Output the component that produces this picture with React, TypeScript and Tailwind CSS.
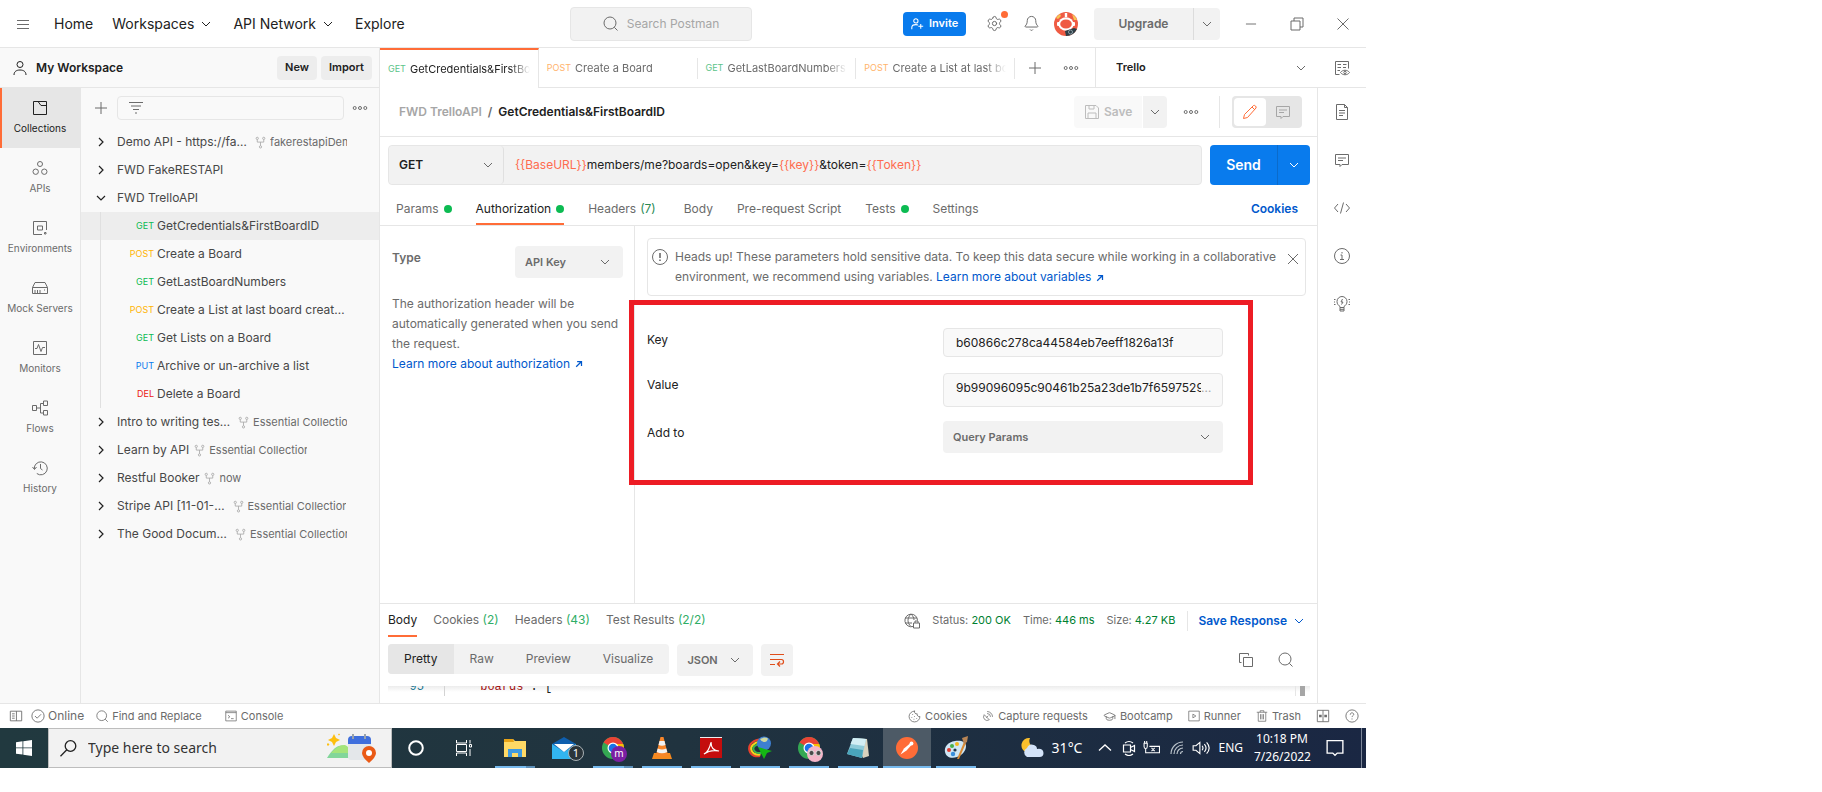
import type { ReactNode } from "react";
import { Bell, Cookie, GraduationCap, Minus, SatelliteDish, Settings } from "lucide-react";

type IconProps = { d: string; size?: number; className?: string; children?: ReactNode; width?: number };

function Icon({ d, size = 16, className = "", children, width = 1 }: IconProps) {
  return (
    <svg
      width={size}
      height={size}
      viewBox="0 0 16 16"
      fill="none"
      stroke="currentColor"
      strokeWidth={width}
      className={`shrink-0 ${className}`}
      aria-hidden="true"
    >
      <path d={d} />
      {children}
    </svg>
  );
}

const CHEVRON_DOWN = "M4 6l4 4 4-4";
const CHEVRON_RIGHT = "M6 4l4 4-4 4";
const SEARCH = "M7 1a6 6 0 1 0 0 12A6 6 0 0 0 7 1zM11.3 11.3 14.5 14.5";
const PLUS = "M8 2v12M2 8h12";
const COMMENT = "M1.5 2.5h13v10H8l-2 2v-2H1.5zM4 6h8M4 8.5h5";
const FORK = "M4 4.500v3h8v-3M8 7.500V12M4 1.500a1.400 1.400 0 1 0 0 2.800 1.400 1.400 0 0 0 0-2.800zM12 1.500a1.400 1.400 0 1 0 0 2.800 1.400 1.400 0 0 0 0-2.800zM8 12a1.400 1.400 0 1 0 0 2.800 1.400 1.400 0 0 0 0-2.800z";
const ARROW_OUT = "M3.5 12.5 12 4M5 4h7v7";

function Dots({ className = "" }: { className?: string }) {
  return <Icon className={className} d="M2.7 6.5a1.5 1.5 0 1 0 0 3 1.5 1.5 0 0 0 0-3zM8 6.5a1.5 1.5 0 1 0 0 3 1.5 1.5 0 0 0 0-3zM13.3 6.5a1.5 1.5 0 1 0 0 3 1.5 1.5 0 0 0 0-3z" />;
}

type DropdownProps = { label: string; value: string; className: string; selectClass: string; chevronClass?: string };

function Dropdown({ label, value, className, selectClass, chevronClass = "right-[10px]" }: DropdownProps) {
  return (
    <label className={`relative flex items-center rounded bg-[#f2f2f2] ${className}`}>
      <span className="sr-only">{label}</span>
      <select className={`h-full w-full appearance-none bg-transparent outline-none ${selectClass}`} defaultValue={value}>
        <option>{value}</option>
      </select>
      <Icon d={CHEVRON_DOWN} className={`pointer-events-none absolute text-[#6b6b6b] ${chevronClass}`} />
    </label>
  );
}

function Header() {
  return (
    <header className="flex h-12 shrink-0 items-center border-b border-[#e6e6e6] text-sm text-[#212121]">
      <nav className="flex w-[570px] items-center pl-[15px]" aria-label="Main">
        <button aria-label="Menu" className="mr-[23px] text-[#6b6b6b]">
          <Icon d="M2 4.5h12M2 8.5h12M2 12.5h12" />
        </button>
        <a href="#home">Home</a>
        <button className="ml-[19px] flex items-center gap-1">
          Workspaces
          <Icon d={CHEVRON_DOWN} />
        </button>
        <button className="ml-[19px] flex items-center gap-1">
          API Network
          <Icon d={CHEVRON_DOWN} />
        </button>
        <a href="#explore" className="ml-[19px]">Explore</a>
      </nav>
      <button className="flex h-[34px] w-[182px] items-center justify-center gap-2 rounded border border-[#e6e6e6] bg-[#f2f2f2] text-xs text-[#a6a6a6]">
        <Icon d={SEARCH} className="text-[#6b6b6b]" />
        Search Postman
      </button>
      <div className="flex flex-1 items-center justify-end pr-[15px] text-[#6b6b6b]">
        <button className="flex h-6 w-[63px] items-center gap-[5px] rounded bg-[#097bed] pl-2 text-[11px] font-semibold text-white">
          <Icon size={13} width={1.3} d="M6 2.2a2.6 2.6 0 1 0 0 5.2 2.6 2.6 0 0 0 0-5.2zM1 15v-2c0-2 2-3.600 5-3.600 1 0 2 .2 2.500.6M12 8.500v6M9 11.500h6" />
          Invite
        </button>
        <button className="relative ml-5" aria-label="Settings">
          <Settings size={17} strokeWidth={1.4} />
          <span className="absolute -right-[5px] -top-1 size-[7px] rounded-full bg-[#ff6c37]" />
        </button>
        <button className="ml-5" aria-label="Notifications">
          <Bell size={17} strokeWidth={1.4} />
        </button>
        <button className="ml-[14px]" aria-label="Account">
          <svg width="24" height="24" viewBox="0 0 24 24" aria-hidden="true">
            <circle cx="12" cy="12" r="12" fill="#ef5b43" />
            <path d="M2 6a12 12 0 0 1 4-4l1 2-3 3zM18 2a12 12 0 0 1 5 6l-3 0z" fill="#f6c453" />
            <rect x="10.800" y="1" width="2.400" height="4" fill="#fff" />
            <rect x="3" y="10" width="3" height="4" rx="1" fill="#fff" />
            <rect x="18" y="10" width="3" height="4" rx="1" fill="#fff" />
            <ellipse cx="12" cy="12" rx="7.600" ry="6.800" fill="#fff" />
            <ellipse cx="12" cy="12" rx="5.800" ry="4.600" fill="#ef5b43" />
            <path d="M11 19l9-3 3 1a12 12 0 0 1-11 7z" fill="#2d3e46" />
            <circle cx="16.500" cy="20" r="2" fill="none" stroke="#8fa0a8" />
          </svg>
        </button>
        <div className="ml-4 flex h-8 overflow-hidden rounded bg-[#f2f2f2]">
          <button className="w-[99px] text-xs font-semibold">Upgrade</button>
          <button className="flex w-[27px] items-center justify-center border-l border-[#dcdcdc]" aria-label="More plans">
            <Icon d={CHEVRON_DOWN} />
          </button>
        </div>
        <button className="ml-[23px]" aria-label="Minimize"><Minus size={16} strokeWidth={1.4} /></button>
        <button className="ml-[30px]" aria-label="Restore">
          <Icon d="M2 5h9v9H2zM5 5V2h9v9h-3" />
        </button>
        <button className="ml-[30px]" aria-label="Close">
          <Icon d="M2.500 2.500l11 11M13.500 2.500l-11 11" />
        </button>
      </div>
    </header>
  );
}

const navItems = [
  { label: "Collections", d: "M1.500 1.500h13v13h-13zM6 1.500l3 4h5.500" },
  { label: "APIs", d: "M8 1.500a2.500 2.500 0 1 0 0 5 2.500 2.500 0 0 0 0-5zM3.700 9a2.700 2.700 0 1 0 0 5.400 2.700 2.700 0 0 0 0-5.400zM12.300 9a2.700 2.700 0 1 0 0 5.400 2.700 2.700 0 0 0 0-5.400z" },
  { label: "Environments", d: "M10 14.500H1.500v-13h13v8.500M5.500 6h5v4h-5zM12.500 12.500h1.500v1.500h-1.500z" },
  { label: "Mock Servers", d: "M.5 7.500 3 2.500h10l2.500 5v6H.5zM.5 7.500h15M3 13.500V10M5.500 13.500V10M8 13.500V10M12.500 9.500v1" },
  { label: "Monitors", d: "M1.500 1.500h13v13h-13zM3 8.500h2l1.500-4 2.500 7 1.500-4H13" },
  { label: "Flows", d: "M.5 5.500h4v5h-4zM4.500 8h4M11.500 3.500h-3v9.500h3M11.500 1h4v4.500h-4zM11.500 10.500h4v4.500h-4z" },
  { label: "History", d: "M2.300 9a6.500 6.500 0 1 1 2.500 4.500M.5 7l2 2.500L4.500 7M8.500 4v4.500l2 1.500" },
];

const methodColor: Record<string, string> = {
  GET: "text-[#0cbb52]",
  POST: "text-[#ffb400]",
  PUT: "text-[#097bed]",
  DEL: "text-[#eb2013]",
};

type Row = { name: string; fork?: string; open?: boolean };
const topRows: Row[] = [
  { name: "Demo API - https://fa…", fork: "fakerestapiDemo" },
  { name: "FWD FakeRESTAPI" },
  { name: "FWD TrelloAPI", open: true },
];
const bottomRows: Row[] = [
  { name: "Intro to writing tes…", fork: "Essential Collection" },
  { name: "Learn by API", fork: "Essential Collection" },
  { name: "Restful Booker", fork: "now" },
  { name: "Stripe API [11-01-…", fork: "Essential Collection" },
  { name: "The Good Docum…", fork: "Essential Collection" },
];
const requests: [string, string][] = [
  ["GET", "GetCredentials&FirstBoardID"],
  ["POST", "Create a Board"],
  ["GET", "GetLastBoardNumbers"],
  ["POST", "Create a List at last board creat…"],
  ["GET", "Get Lists on a Board"],
  ["PUT", "Archive or un-archive a list"],
  ["DEL", "Delete a Board"],
];

function CollectionRow({ name, fork, open }: Row) {
  return (
    <li className="flex h-7 items-center pl-3 pr-8">
      <Icon d={open ? CHEVRON_DOWN : CHEVRON_RIGHT} width={1.2} className="mr-2 text-[#212121]" />
      <span className={name.endsWith("…") ? "whitespace-nowrap pr-[3px]" : "whitespace-nowrap"}>{name}</span>
      {fork && (
        <>
          <Icon d={FORK} size={13} className="ml-1 mr-[3px] text-[#a6a6a6]" />
          <span className="max-w-[98px] overflow-hidden whitespace-nowrap text-[11px] text-[#6b6b6b]">{fork}</span>
        </>
      )}
    </li>
  );
}

function Sidebar() {
  return (
    <aside className="flex w-[380px] shrink-0 flex-col border-r border-[#e6e6e6] bg-[#f9f9f9]">
      <div className="flex h-10 shrink-0 items-center border-b border-[#e6e6e6] pl-3 pr-[7px]">
        <Icon d="M8 1.500a3 3 0 1 0 0 6 3 3 0 0 0 0-6zM2 15c0-3.500 2.500-5 6-5s6 1.500 6 5" className="text-[#212121]" />
        <span className="ml-2 flex-1 text-xs font-semibold text-[#212121]">My Workspace</span>
        <button className="h-6 w-10 rounded bg-[#ededed] text-[11px] font-semibold text-[#212121]">New</button>
        <button className="ml-1 h-6 w-[51px] rounded bg-[#ededed] text-[11px] font-semibold text-[#212121]">Import</button>
      </div>
      <div className="flex min-h-0 flex-1">
        <nav className="flex w-[81px] shrink-0 flex-col border-r border-[#e6e6e6]" aria-label="Sections">
          {navItems.map((n, i) => (
            <button
              key={n.label}
              className={
                i === 0
                  ? "flex h-[60px] flex-col items-center gap-[5px] border-l-2 border-[#ff6c37] bg-[#e6e6e6] pr-[2px] pt-3 text-[10px] text-[#212121]"
                  : "flex h-[60px] flex-col items-center gap-[5px] pt-3 text-[10px] text-[#6b6b6b]"
              }
            >
              <Icon d={n.d} />
              {n.label}
            </button>
          ))}
        </nav>
        <div className="flex min-w-0 flex-1 flex-col">
          <div className="flex h-10 shrink-0 items-center pl-3">
            <button aria-label="Create collection" className="text-[#6b6b6b]"><Icon d={PLUS} /></button>
            <label className="ml-2 flex h-6 w-[227px] items-center rounded-sm border border-[#e6e6e6] pl-[10px]">
              <Icon d="M1 2.500h14M3 6h10M5 9.500h6M7 13h2" className="text-[#6b6b6b]" />
              <input aria-label="Filter collections" className="min-w-0 flex-1 bg-transparent outline-none" />
            </label>
            <button aria-label="More collection actions" className="ml-2 text-[#6b6b6b]"><Dots /></button>
          </div>
          <ul className="text-xs text-[#474747]">
            {topRows.map((r) => <CollectionRow key={r.name} {...r} />)}
            {requests.map(([m, name], i) => (
              <li key={name} className={i === 0 ? "flex h-7 bg-[#ededed] pl-[19px]" : "flex h-7 pl-[19px]"}>
                <span className="flex flex-1 items-center border-l border-[#e0e0e0]">
                  <span className={`w-[53px] text-right text-[9px] ${methodColor[m]}`}>{m}</span>
                  <a href="#request" className="ml-[3px] whitespace-nowrap">{name}</a>
                </span>
              </li>
            ))}
            {bottomRows.map((r) => <CollectionRow key={r.name} {...r} />)}
          </ul>
        </div>
      </div>
    </aside>
  );
}

const openTabs: [string, string][] = [
  ["GET", "GetCredentials&FirstBoardID"],
  ["POST", "Create a Board"],
  ["GET", "GetLastBoardNumbers"],
  ["POST", "Create a List at last board created"],
];

function TabStrip() {
  return (
    <div className="flex h-10 shrink-0">
      <div className="grid min-w-0 flex-1 grid-cols-4">
        {openTabs.map(([m, name], i) => (
          <button
            key={name}
            className={
              i === 0
                ? "flex min-w-0 items-center border-r border-t-2 border-r-[#e6e6e6] border-t-[#ff6c37] px-2 text-[11px] text-[#212121]"
                : "flex min-w-0 items-center border-b border-[#e6e6e6] pl-2 pt-px text-[11px] text-[#6b6b6b]"
            }
          >
            <span className={`mr-1 text-[9px] ${m === "GET" ? "text-[#5cc48a]" : "text-[#ffb36b]"}`}>{m}</span>
            <span className="min-w-0 flex-1 overflow-hidden whitespace-nowrap text-left [mask-image:linear-gradient(to_right,black_calc(100%-20px),transparent)]">
              {name}
            </span>
            {i > 0 && <span className="ml-2 h-[21px] w-px bg-[#e6e6e6]" />}
          </button>
        ))}
      </div>
      <div className="flex w-[80px] items-center border-b border-[#e6e6e6] pl-3 text-[#6b6b6b]">
        <button aria-label="New tab"><Icon d={PLUS} /></button>
        <button aria-label="Tab options" className="ml-5"><Dots /></button>
      </div>
      <label className="relative flex w-[222px] items-center border-b border-l border-[#e6e6e6]">
        <span className="sr-only">Environment</span>
        <select className="h-full w-full appearance-none bg-transparent pl-5 text-[11px] font-semibold text-[#212121] outline-none" defaultValue="Trello">
          <option>Trello</option>
        </select>
        <Icon d={CHEVRON_DOWN} className="pointer-events-none absolute right-2 text-[#6b6b6b]" />
      </label>
      <button className="flex w-[49px] items-center justify-center border-b border-[#e6e6e6] text-[#6b6b6b]" aria-label="Environment quick look">
        <Icon d="M5.500 14.500h-4v-13h13v7M3.500 4.500H7M9 4.500h3.500M3.500 7.500H7M9 7.500h3M3.500 10.500H6M6.500 12.500c2-3 7-3 9 0-2 3-7 3-9 0zM11 11.300a1.200 1.200 0 1 0 0 2.400 1.200 1.200 0 0 0 0-2.400z" />
      </button>
    </div>
  );
}

function Dot() {
  return <span className="ml-[5px] size-2 rounded-full bg-[#0cbb52]" />;
}

function RequestHead() {
  return (
    <>
      <div className="flex h-[49px] shrink-0 items-center border-b border-[#e6e6e6] pl-[19px] pr-[15px] text-xs font-semibold">
        <span className="text-[#a6a6a6]">FWD TrelloAPI</span>
        <span className="mx-[6px] text-[#6b6b6b]">/</span>
        <h1 className="flex-1 text-[#212121]">GetCredentials&amp;FirstBoardID</h1>
        <button className="flex h-8 w-[68px] items-center gap-1 rounded-l bg-[#f9f9f9] pl-[10px] text-[#bdbdbd]">
          <Icon d="M1.500 1.500H12l2.500 2.500v10.500h-13zM5 1.500v3.500h5V1.500M4 14.500V9h8v5.500" />
          Save
        </button>
        <button className="ml-px flex h-8 w-6 items-center justify-center rounded-r bg-[#f2f2f2] text-[#6b6b6b]" aria-label="Save options">
          <Icon d={CHEVRON_DOWN} />
        </button>
        <button className="ml-4 text-[#6b6b6b]" aria-label="Request actions"><Dots /></button>
        <span className="ml-5 mr-3 h-8 w-px bg-[#e6e6e6]" />
        <div className="flex h-8 w-[70px] rounded bg-[#e6e6e6] p-[2px]">
          <button className="flex w-8 items-center justify-center rounded bg-white text-[#ff6c37]" aria-label="Build">
            <Icon d="M1.500 14.500l1-4L11.500 1.500q1-.5 2 .5t.5 2L5.500 13.500zM10 3l3 3" />
          </button>
          <button className="flex flex-1 items-center justify-center text-[#a6a6a6]" aria-label="Comments">
            <Icon d={COMMENT} />
          </button>
        </div>
      </div>
      <div className="flex shrink-0 gap-2 pl-2 pr-[7px] pt-2 text-xs">
        <div className="flex h-10 min-w-0 flex-1 items-center rounded border border-[#e6e6e6] bg-[#f2f2f2]">
          <Dropdown
            label="Method"
            value="GET"
            className="h-full w-[115px] border-r border-[#e0e0e0]"
            selectClass="pl-[10px] font-semibold text-[#212121]"
            chevronClass="right-[7px]"
          />
          <div
            role="textbox"
            aria-label="Request URL"
            contentEditable
            suppressContentEditableWarning
            className="flex-1 whitespace-nowrap pl-[11px] text-[#212121] outline-none"
          >
            <span className="text-[#ff6c4f]">{"{{BaseURL}}"}</span>members/me?boards=open&amp;key=
            <span className="text-[#ff6c4f]">{"{{key}}"}</span>&amp;token=
            <span className="text-[#ff6c4f]">{"{{Token}}"}</span>
          </div>
        </div>
        <div className="flex h-10 w-[100px] overflow-hidden rounded bg-[#097bed] text-white">
          <button className="flex-1 text-sm font-semibold">Send</button>
          <button className="flex w-[33px] items-center justify-center border-l border-[#0b6bcb]" aria-label="Send options">
            <Icon d={CHEVRON_DOWN} />
          </button>
        </div>
      </div>
      <div className="flex h-[41px] shrink-0 items-stretch gap-6 border-b border-[#e6e6e6] pl-4 pr-[19px] text-xs text-[#6b6b6b]">
        <button className="flex items-center pt-2">Params<Dot /></button>
        <button className="flex items-center border-b-2 border-[#ff6c37] pt-[10px] text-[#212121]">Authorization<Dot /></button>
        <button className="flex items-center gap-1 pr-1 pt-2">Headers <span className="text-[#2b8a55]">(7)</span></button>
        <button className="pt-2">Body</button>
        <button className="pt-2">Pre-request Script</button>
        <button className="flex items-center pt-2">Tests<Dot /></button>
        <button className="pt-2">Settings</button>
        <button className="ml-auto pt-2 font-semibold text-[#0058cc]">Cookies</button>
      </div>
    </>
  );
}

function AuthPanel() {
  return (
    <div className="flex min-h-0 flex-1 text-xs">
      <div className="w-[255px] shrink-0 border-r border-[#e6e6e6] pl-3 pr-[11px] pt-5 text-[#6b6b6b]">
        <div className="flex justify-between">
          <span className="pt-1 font-semibold">Type</span>
          <Dropdown label="Authorization type" value="API Key" className="h-8 w-[108px]" selectClass="pl-[10px] text-[11px] font-semibold" />
        </div>
        <p className="mt-4 whitespace-nowrap leading-5">
          The authorization header will be
          <br />
          automatically generated when you send
          <br />
          the request.
        </p>
        <a href="#authorization" className="flex items-center gap-1 leading-5 text-[#0058cc]">
          Learn more about authorization
          <Icon d={ARROW_OUT} size={10} width={2} />
        </a>
      </div>
      <div className="relative min-w-0 flex-1 pl-3 pr-[11px] pt-3">
        <div className="flex h-[58px] rounded border border-[#e6e6e6] px-1 pt-2 leading-5 text-[#6b6b6b]">
          <Icon d="M8 .5a7.500 7.500 0 1 0 0 15 7.500 7.500 0 0 0 0-15z" className="mt-[2px]"><path d="M8 4v5M8 10.500v1.500" strokeWidth="1.600" /></Icon>
          <p className="ml-[7px] flex-1">
            Heads up! These parameters hold sensitive data. To keep this data secure while working in a collaborative
            environment, we recommend using variables.{" "}
            <a href="#variables" className="text-[#0058cc]">
              Learn more about variables
              <Icon d={ARROW_OUT} size={10} width={2} className="ml-1 inline" />
            </a>
          </p>
          <button className="flex h-6 items-center" aria-label="Dismiss">
            <Icon d="M3 3l10 10M13 3L3 13" />
          </button>
        </div>
        <form className="grid grid-cols-[296px_280px] text-[#212121]">
          <label htmlFor="api-key" className="pt-9">Key</label>
          <input id="api-key" defaultValue="b60866c278ca44584eb7eeff1826a13f" className="mt-8 h-[29px] rounded border border-[#e6e6e6] bg-[#f9f9f9] px-3 outline-none" />
          <label htmlFor="api-value" className="pt-5">Value</label>
          <div className="mt-4 flex h-[34px] items-start rounded border border-[#e6e6e6] bg-[#f9f9f9] pl-3 pr-2 pt-[6px]">
            <input id="api-value" defaultValue="9b99096095c90461b25a23de1b7f65975291" className="w-[245px] bg-transparent outline-none" />
            <span className="text-[#a6a6a6]">…</span>
          </div>
          <span className="pt-[18px]">Add to</span>
          <Dropdown label="Add to" value="Query Params" className="mt-[14px] h-8" selectClass="pl-[10px] text-[11px] font-semibold text-[#6b6b6b]" />
        </form>
        <div className="pointer-events-none absolute -left-[6px] top-[74px] h-[185px] w-[624px] border-[5px] border-[#ed1c24]" />
      </div>
    </div>
  );
}

function Response() {
  return (
    <section className="h-[100px] shrink-0 overflow-hidden border-t border-[#e6e6e6] pl-2 pr-[7px] text-xs text-[#6b6b6b]">
      <div className="flex h-[33px] items-stretch">
        <div className="flex gap-4">
          <button className="border-b-2 border-[#ff6c37] text-[#212121]">Body</button>
          <button className="pb-[2px]">Cookies <span className="text-[#2fae66]">(2)</span></button>
          <button className="pb-[2px]">Headers <span className="text-[#2fae66]">(43)</span></button>
          <button className="pb-[2px]">Test Results <span className="text-[#2fae66]">(2/2)</span></button>
        </div>
        <div className="ml-auto flex items-center gap-3 text-[11px]">
          <Icon d="M9 13.500a6.300 6.300 0 1 1 4.500-6M7 1c-4 4-4 9 0 12.500M7 1c2 2 3 4 3 6M1 5h12M1 10h7M9.500 10h6v5h-6zM11 10V8h3v2" />
          <span>Status: <span className="text-[#007f31]">200 OK</span></span>
          <span>Time: <span className="text-[#007f31]">446 ms</span></span>
          <span>Size: <span className="text-[#007f31]">4.27 KB</span></span>
          <span className="h-5 w-px bg-[#e6e6e6]" />
          <button className="-ml-[2px] flex items-center gap-1 pr-[3px] text-xs font-semibold text-[#0058cc]">
            Save Response
            <Icon d={CHEVRON_DOWN} />
          </button>
        </div>
      </div>
      <div className="mt-[7px] flex h-8 items-start gap-2">
        <div className="flex h-[30px] overflow-hidden rounded bg-[#f2f2f2]">
          <button className="bg-[#e6e6e6] px-4 text-[#212121]">Pretty</button>
          <button className="px-4">Raw</button>
          <button className="px-4">Preview</button>
          <button className="px-4">Visualize</button>
        </div>
        <Dropdown label="Response format" value="JSON" className="h-8 w-[76px]" selectClass="pl-[10px] text-[11px] font-semibold" />
        <button className="flex size-8 items-center justify-center rounded bg-[#f2f2f2] text-[#e04e1b]" aria-label="Wrap lines">
          <Icon d="M1 2.500h14M1 7.500h11.500q2 0 2 2.200t-2 2.300H9M1 12.500h5M11 9.500 8.500 12l2.500 2.500" width={1.200} />
        </button>
        <div className="ml-auto flex h-8 items-center gap-6 pr-4">
          <button aria-label="Copy response"><Icon d="M3.500 10.500h-2v-9h9v2M5.500 5.500h9v9h-9z" /></button>
          <button aria-label="Search response"><Icon d={SEARCH} /></button>
        </div>
      </div>
      <div className="mt-[10px] flex h-[10px] overflow-hidden bg-linear-to-b from-[#ececec] to-white to-60% font-['Liberation_Mono',monospace] leading-[18px]">
        <span className="-mt-2 w-9 text-right text-[#237893]">95</span>
        <span className="ml-5 w-px bg-[#d3d3d3]" />
        <code className="-mt-2 ml-7 flex-1 whitespace-pre font-['Liberation_Mono',monospace] text-[#212121]">
          <span className="text-[#a31515]">"boards"</span>: [
        </code>
        <span className="mr-[5px] flex w-[10px] justify-end border-l border-[#e6e6e6]">
          <span className="w-[5px] bg-[#a6a6a6]" />
        </span>
      </div>
    </section>
  );
}

const railIcons = [
  { label: "Documentation", d: "M2.500.5h8l3 3v12h-11zM10.500.5v3h3M5 6.500h6M5 9h6M5 11.500h4" },
  { label: "Comments", d: COMMENT },
  { label: "Code", d: "M4 4 .5 8 4 12M12 4l3.500 4L12 12M9.500 2.500l-3 11" },
  { label: "Info", d: "M8 .5a7.500 7.500 0 1 0 0 15 7.500 7.500 0 0 0 0-15zM6.500 7H8v4.500M6 11.500h4M8 4v1.500" },
  { label: "Related", d: "M6 11.500v-1C4.500 9.500 3 8 3 5.500a5 5 0 0 1 10 0c0 2.500-1.500 4-3 5v1zM6 11.500V15h4v-3.500M6 13.300h4M8.500 3 7 6h2L7.500 8.500M0 3.500h1.500M0 6h1M0 8.500h1.500M14.500 3.500H16M15 6h1M14.500 8.500H16" },
];

function StatusBar() {
  return (
    <footer className="flex h-[25px] shrink-0 items-center border-t border-[#e6e6e6] pl-[9px] pr-[7px] text-[11px] text-[#6b6b6b]">
      <button aria-label="Toggle sidebar"><Icon size={14} d="M1.500 2.500h13v11h-13zM8.500 2.500v11M3.500 5.500h3M3.500 8h3M3.500 10.500h3" /></button>
      <span className="ml-2 flex items-center gap-[3px] text-xs">
        <Icon size={14} d="M8 1a7 7 0 1 0 0 14A7 7 0 0 0 8 1zM4.500 8l2.500 2.500L11.500 6" />
        Online
      </span>
      <button className="ml-3 flex items-center gap-[3px]"><Icon size={13} d={SEARCH} />Find and Replace</button>
      <button className="ml-[23px] flex items-center gap-1"><Icon size={12} d="M1 1.500h14v13H1zM1 3.500h14M4 7l2.500 2L4 11M8 11.500h3.500" />Console</button>
      <div className="ml-auto flex items-center gap-[15px]">
        <button className="flex items-center gap-1"><Cookie size={13} strokeWidth={1.500} />Cookies</button>
        <button className="flex items-center gap-1"><SatelliteDish size={12} strokeWidth={1.500} />Capture requests</button>
        <button className="flex items-center gap-1"><GraduationCap size={13} strokeWidth={1.500} />Bootcamp</button>
        <button className="flex items-center gap-1"><Icon size={12} d="M1 1.500h14v13H1zM6.500 5.500v5l4-2.500z" />Runner</button>
        <button className="flex items-center gap-1"><Icon size={12} d="M1 3h14M5.500 3V1h5v2M3 3v12h10V3M6 5.500v7M8 5.500v7M10 5.500v7" />Trash</button>
        <button aria-label="Two pane view"><Icon size={14} d="M1.500 1.500h13v13h-13zM8 1.500v13"><path d="M3.500 6.500h3v3h-3zM9.500 6.500h3v3h-3z" fill="currentColor" stroke="none" /></Icon></button>
        <button aria-label="Help"><Icon size={14} d="M8 1a7 7 0 1 0 0 14A7 7 0 0 0 8 1zM6 6.500c0-3 4-2.500 4-.3 0 1.300-2 1.500-2 3M8 10.800v1.200" /></button>
      </div>
    </footer>
  );
}

function ChromeLogo() {
  return (
    <svg width="24" height="24" viewBox="0 0 24 24" aria-hidden="true">
      <circle cx="12" cy="12" r="11" fill="#34a853" />
      <path d="M12 12 2.500 6.500A11 11 0 0 1 21.500 6.500L22 8H12z" fill="#ea4335" />
      <path d="M12 8h10.300A11 11 0 0 1 12 23l4.500-9z" fill="#fbbc04" />
      <circle cx="12" cy="12" r="5.500" fill="#fff" />
      <circle cx="12" cy="12" r="4.300" fill="#1a73e8" />
    </svg>
  );
}

const taskApps: { label: string; state: string; art: ReactNode }[] = [
  {
    label: "File Explorer",
    state: "double",
    art: (
      <svg width="24" height="24" viewBox="0 0 24 24" aria-hidden="true">
        <path d="M1 3h9l2 2h11v16H1z" fill="#ffd965" />
        <path d="M1 3h9l1 3H1z" fill="#e8a317" />
        <path d="M5 21v-8h14v8h-4v-4H9v4z" fill="#3f9ae0" />
      </svg>
    ),
  },
  {
    label: "Mail",
    state: "idle",
    art: (
      <span className="relative">
        <svg width="26" height="24" viewBox="0 0 26 24" aria-hidden="true">
          <path d="M1 8 13 1l12 7v15H1z" fill="#0f5fae" />
          <path d="M1 8l12 8 12-8v15H1z" fill="#32b5f1" />
          <path d="M3 8h20l-10 8z" fill="#fff" />
        </svg>
        <span className="absolute left-[17px] top-[9px] flex size-4 items-center justify-center rounded-full border border-[#aab2b6] bg-[#2a343a] text-[11px] text-white">1</span>
      </span>
    ),
  },
  {
    label: "Chrome",
    state: "double",
    art: (
      <span className="relative">
        <ChromeLogo />
        <span className="absolute left-[10px] top-[10px] flex size-4 items-center justify-center rounded-full bg-[#7b1fa2] pb-px text-[10px] text-white">m</span>
      </span>
    ),
  },
  {
    label: "VLC",
    state: "open",
    art: (
      <svg width="24" height="24" viewBox="0 0 24 24" aria-hidden="true">
        <path d="M4 17h16l2 6H2z" fill="#f58a1f" />
        <path d="M10.500 1h3L18 19q-6 3-12 0z" fill="#f7862a" />
        <path d="M9.500 5h5l1 4q-3.500 1.500-7 0zM7.700 12.500q4.300 2 8.600 0l1 3.500q-5.300 2.500-10.600 0z" fill="#f2f2f2" />
      </svg>
    ),
  },
  {
    label: "Acrobat Reader",
    state: "open",
    art: (
      <svg width="24" height="24" viewBox="0 0 24 24" aria-hidden="true">
        <rect x="1" y="1" width="22" height="21" fill="#c40d0d" />
        <path d="M1 1h22v1H1z" fill="#eee" />
        <path d="M5 18c3-1 6-6 7-12 0 6 3 9 8 9-5-1-11 0-15 3z" fill="none" stroke="#fff" strokeWidth="1.200" />
      </svg>
    ),
  },
  {
    label: "Download Manager",
    state: "open",
    art: (
      <svg width="24" height="24" viewBox="0 0 24 24" fill="none" aria-hidden="true">
        <path d="M11 3.500C3 5 0 10 1.500 15S8 21 12 20" stroke="#e8402c" strokeWidth="2" />
        <path d="M12 5.500C5 7 2 11 3.500 14.500s5 4.500 9 4" stroke="#f7d21e" strokeWidth="2" />
        <path d="M13 7.500c-6 1-8.500 3.500-7.500 6s4 4 8 3.500" stroke="#39b54a" strokeWidth="2" />
        <circle cx="16" cy="7.500" r="7" fill="#3e7fd0" />
        <path d="M12 3q4-2.500 8-.5-1 4-4 3.500T12 3z" fill="#cfd8a0" />
        <path d="M10 11l14 4-5 2-3 6z" fill="#14b814" />
      </svg>
    ),
  },
  {
    label: "Chrome profile",
    state: "open",
    art: (
      <span className="relative">
        <ChromeLogo />
        <svg width="16" height="16" viewBox="0 0 16 16" className="absolute left-[10px] top-[10px]" aria-hidden="true">
          <circle cx="8" cy="8" r="8" fill="#f5b5c8" />
          <circle cx="4.500" cy="7" r="2.600" fill="#4a4a4a" stroke="#ddd" />
          <circle cx="11.500" cy="7" r="2.600" fill="#4a4a4a" stroke="#ddd" />
        </svg>
      </span>
    ),
  },
  {
    label: "Notepad",
    state: "open",
    art: (
      <svg width="24" height="24" viewBox="0 0 24 24" aria-hidden="true">
        <path d="M8 2l13 1 2 17-6 2z" fill="#d9d2bd" />
        <path d="M7 2l13 1-4 19-15-4z" fill="#8fcbd9" />
        <path d="M7 2l13 1-1.500 7L4.500 8z" fill="#d3eef4" />
        <path d="M4 12l13 2-1 8-15-4z" fill="#4aa5bb" />
      </svg>
    ),
  },
  {
    label: "Postman",
    state: "active",
    art: (
      <svg width="24" height="24" viewBox="0 0 24 24" aria-hidden="true">
        <circle cx="12" cy="12" r="11" fill="#ff6c37" />
        <path d="M5.500 18.500l3.500-6 6-5 1.500 1.500-5 5.500z" fill="#fff" />
        <circle cx="16.500" cy="7.500" r="1.900" fill="#fff" />
      </svg>
    ),
  },
  {
    label: "Paint",
    state: "open",
    art: (
      <svg width="24" height="24" viewBox="0 0 24 24" aria-hidden="true">
        <path d="M11 5C4 6 0 11 1 16s6 7 12 5 9-7 9-11-5-6-11-5z" fill="#cfe6f5" />
        <circle cx="8" cy="10" r="2" fill="#47b04a" />
        <circle cx="13" cy="8" r="2" fill="#f3b61f" />
        <circle cx="5" cy="14" r="2" fill="#e23c30" />
        <circle cx="9" cy="18" r="2.200" fill="#3a8fdc" />
        <circle cx="11" cy="14" r="1.600" fill="#21364a" />
        <path d="M13 23 20 6l2 1-7 16z" fill="#d98b35" />
        <path d="M18 2l6-2-1 6-3 2z" fill="#b98555" />
      </svg>
    ),
  },
];

function Taskbar() {
  return (
    <div className="flex h-10 shrink-0 bg-linear-to-r from-[#21393f] via-[#20333f] to-[#1a2743] font-['Noto_Sans','Open_Sans',sans-serif] text-white">
      <button className="flex w-12 items-center justify-center" aria-label="Start">
        <svg width="16" height="16" viewBox="0 0 16 16" fill="#fff" aria-hidden="true">
          <path d="M0 2.200 6.500 1.300v6.200H0zM7.300 1.200 16 0v7.500H7.300zM0 8.300h6.500v6.300L0 13.700zM7.300 8.300H16V16l-8.700-1.200z" />
        </svg>
      </button>
      <label className="flex w-[344px] items-center border border-[#bdbdbd] bg-[#f2f2f2] pl-[11px] pr-[14px]">
        <svg width="17" height="17" viewBox="0 0 17 17" fill="none" stroke="#212121" strokeWidth="1.300" aria-hidden="true">
          <circle cx="10.500" cy="6" r="5.300" />
          <path d="M6.800 9.800.5 16.200" />
        </svg>
        <input aria-label="Search" placeholder="Type here to search" className="ml-[11px] min-w-0 flex-1 bg-transparent text-sm text-[#212121] outline-none placeholder:text-[#333]" />
        <svg width="50" height="32" viewBox="0 0 50 32" aria-hidden="true">
          <path d="M0 26C6 16 12 12 17 14q5 2 8 12z" fill="#82d69a" />
          <path d="M4 21q8-9 14-8 4 1 6 8z" fill="#a5e47b" />
          <path d="M7 2l2 4 4 2-4 2-2 4-2-4-4-2 4-2zM12 1.500l1 1-1 1-1-1zM1 11l1.500 1.500L1 14l-1.500-1.500z" fill="#fdbf0f" />
          <rect x="21" y="6" width="23" height="22" rx="3" fill="#e4e7ea" />
          <path d="M21 12V8q0-4 4-4h15q4 0 4 4v4z" fill="#3f6fdd" />
          <path d="M26 2v5M38 2v5" stroke="#9aa3ab" strokeWidth="2" />
          <path d="M35 21a7 7 0 0 1 14 0q0 4-7 10-7-6-7-10z" fill="#ea5a16" />
          <circle cx="42" cy="21" r="3" fill="#fff" />
        </svg>
      </label>
      <button className="flex w-12 items-center justify-center" aria-label="Cortana">
        <svg width="16" height="16" viewBox="0 0 16 16" fill="none" stroke="#fff" strokeWidth="2" aria-hidden="true"><circle cx="8" cy="8" r="6.800" /></svg>
      </button>
      <button className="mr-[3px] flex w-12 items-center justify-center" aria-label="Task view">
        <Icon d="M.5 0v3h10V0M.5 4.500h10v7H.5zM.5 16v-3h10v3M14 0v3.500M14 9v7M13.500 4.500h2v2.500h-2z" />
      </button>
      {taskApps.map((a) => (
        <button
          key={a.label}
          aria-label={a.label}
          className={a.state === "active" ? "relative mr-px flex w-12 items-center justify-center bg-[#4d5a66]" : "relative mr-px flex w-12 items-center justify-center"}
        >
          {a.art}
          {a.state === "active" && <span className="absolute inset-x-0 bottom-0 h-[2px] bg-[#76b9ed]" />}
          {a.state === "open" && <span className="absolute inset-x-1 bottom-0 h-[2px] bg-[#76b9ed]" />}
          {a.state === "double" && <span className="absolute inset-x-1 bottom-0 h-[2px] border-r-[9px] border-[#5c8fb8] bg-[#76b9ed]" />}
        </button>
      ))}
      <div className="ml-auto flex items-center text-xs">
        <svg width="24" height="22" viewBox="0 0 24 22" className="mr-[7px]" aria-hidden="true">
          <path d="M9 1a7.500 7.500 0 1 0 6 10A7 7 0 0 1 9 1z" fill="#fbc02d" />
          <path d="M6 20a5 5 0 0 1 0-9q2-5 7-3 3 1 3 4 6-1 6.500 4 0 4-4 4z" fill="#d3e3f8" />
        </svg>
        <span className="text-sm">31°C</span>
        <Icon d="M2 10.500 8 5l6 5.500" className="ml-[15px]" width={1.300} />
        <Icon d="M2.500 5h7v7h-7zM9.500 7.500l4-2v6l-4-2M4 3q4-3 8 0M4 14q4 3 8 0" className="ml-2" width={1.200} />
        <Icon size={17} d="M6 6h9.500v6H6M1 3v3q0 2 1.500 2T4 6V3zM2.500 8v4H6M8 7.500l3 3M11 7.500l-3 3M1.500 1v2M3.500 1v2" className="ml-[6px]" />
        <Icon d="M2 14A12 12 0 0 1 14 2M5 14a9 9 0 0 1 9-9M8 14a6 6 0 0 1 6-6M11.500 14a2.500 2.500 0 0 1 2.500-2.500" className="ml-[9px] text-[#b9c2ca]" width={1.200} />
        <Icon size={18} d="M1 6h2.500L7 3v10l-3.500-3H1zM9 6q1.500 2 0 4M11 4.500q3 3.500 0 7M13 3q4.500 5 0 10" className="ml-[7px]" />
        <span className="ml-2">ENG</span>
        <div className="ml-[11px] w-14 text-center leading-[18px]">
          10:18 PM
          <br />
          7/26/2022
        </div>
        <Icon size={18} d="M1 1.500h14v11h-5l-2 2-2-2H1z" className="ml-4 mr-[17px]" width={1.200} />
        <span className="mr-1 h-10 w-px bg-[#7d8799]" />
      </div>
    </div>
  );
}

export default function App() {
  return (
    <div className="min-h-screen bg-white pb-6 pr-[456px] font-['Inter',sans-serif]">
      <div className="flex min-h-[calc(100vh-24px)] flex-col">
        <Header />
        <div className="flex min-h-0 flex-1">
          <Sidebar />
          <div className="flex min-w-0 flex-1 flex-col">
            <TabStrip />
            <div className="flex min-h-0 flex-1">
              <main className="flex min-w-0 flex-1 flex-col">
                <RequestHead />
                <AuthPanel />
                <Response />
              </main>
              <nav className="flex w-[49px] shrink-0 flex-col items-center gap-8 border-l border-[#e6e6e6] pt-4 text-[#6b6b6b]" aria-label="Request tools">
                {railIcons.map((r) => (
                  <button key={r.label} aria-label={r.label}><Icon d={r.d} /></button>
                ))}
              </nav>
            </div>
          </div>
        </div>
        <StatusBar />
        <Taskbar />
      </div>
    </div>
  );
}
